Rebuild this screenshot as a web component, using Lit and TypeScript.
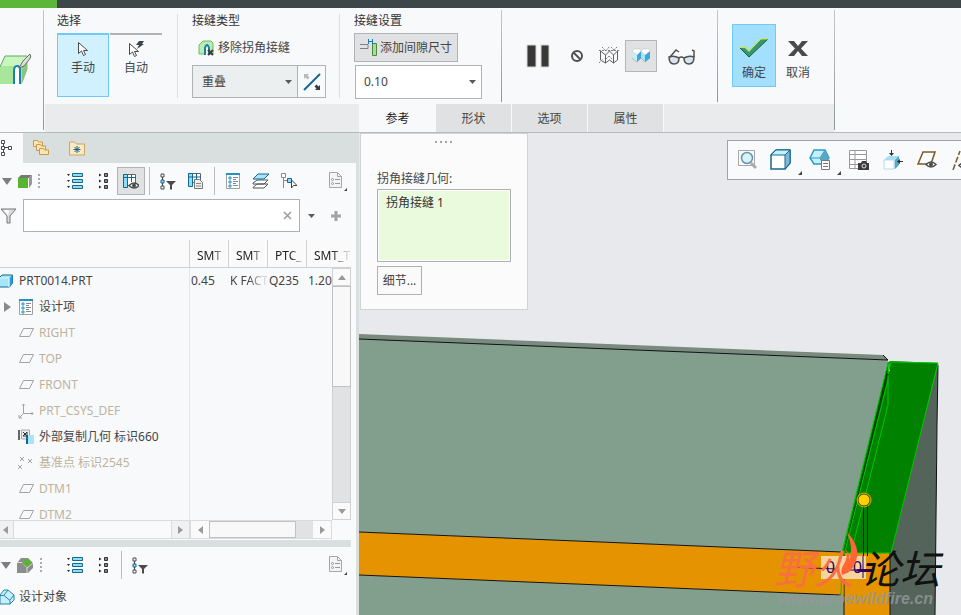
import { LitElement, html, svg, css, nothing, TemplateResult } from "lit";
import { customElement, property } from "lit/decorators.js";
import { classMap } from "lit/directives/class-map.js";

const pic = (w: number, h: number, body: unknown) =>
  html`<svg class="pic" width=${w} height=${h} viewBox="0 0 ${w} ${h}" fill="none" aria-hidden="true">${body}</svg>`;

const cursorPath = (x: number, y: number) => svg`
  <path transform="translate(${x} ${y})" d="M.5.5v11l3-2.500 2 4.500 2-1-2-4h4z" fill="#fff" stroke="#4a4a4a"/>`;

const eye = (x: number, y: number) => svg`<g transform="translate(${x} ${y})">
  <path d="M0 3.500Q5-1.500 10 3.500 5 8.500 0 3.500z" fill="#fff" stroke="#4a4a4a" stroke-width="1.500"/>
  <circle cx="5" cy="3.500" r="2" fill="#4a4a4a"/></g>`;

const icons: Record<string, TemplateResult> = {
  seam: pic(32, 32, svg`
    <path d="M0 30V13L5 2h22v14l-5 14H0z" fill="#a8e79b"/>
    <path d="M5 2h22l-5 10H0z" fill="#c9f5bf"/><path d="M0 13L5 2h22" stroke="#63a85c"/>
    <path d="M22 12l5-9v12l-5 13" fill="#86c97c" stroke="#86bf7d"/>
    <path d="M14 30V17q0-5 3-5t4 5v13z" fill="#fff"/><path d="M14 30V17q0-5 3-5t3 3v15" stroke="#1b7fae" stroke-width="2"/>
    <path d="M19 14l4-7 7-7q2 3-1 6l-5 6z" fill="#ddd" stroke="#6b6b6b"/>`),
  cursor: pic(12, 16, cursorPath(1, 1)),
  cursorAuto: pic(18, 16, svg`${cursorPath(2, 2)}<path d="M12 0h5l-2 3h2l-7 5 2-4H9z" fill="#3c4648"/>`),
  removeSeam: pic(16, 16, svg`
    <path d="M1 14V5l4-4h8l2 2v11z" fill="#b9efae" stroke="#77b46e"/>
    <path d="M7 15V8q2-6 4 0v7" fill="#fff" stroke="#1b7fae" stroke-width="2"/>
    <path d="M10 10l5 5M15 10l-5 5" stroke="#3c3c3c" stroke-width="2"/>`),
  flip: pic(18, 18, svg`
    <path d="M1 17L17 1" stroke="#14688f" stroke-width="2"/>
    <path d="M1 1h5L4.500 2.500l2 2-2 2-2-2L1 6z" fill="#b9b9b9"/>
    <path d="M17 17h-5l1.500-1.500-2-2 2-2 2 2L17 12z" fill="#3c3c3c"/>`),
  gapDim: pic(18, 18, svg`
    <path d="M0 5.500h8v4H0" stroke="#808080"/>
    <path d="M12.500 4.500h4v12h-4z" fill="#9be58a" stroke="#4f8548"/>
    <path d="M8.500 0v5M12.500 0v5M8 2.500h5" stroke="#1b7fae"/>`),
  pause: pic(24, 24, svg`<path d="M1 1h9v22H1zM15 1h8v22h-8z" fill="#383838" stroke="#d8d8d2"/>`),
  none: pic(14, 14, svg`<circle cx="7" cy="7" r="5" stroke="#505050" stroke-width="2"/><path d="M3.500 3.500l7 7" stroke="#505050" stroke-width="2"/>`),
  wire: pic(22, 18, svg`
    <path d="M2.500 3v10l5 3 4-3 4 3 4-3V3M7.500 8v8M15.500 8v8M2.500 4l5 4 4-4 4 4 4-4" stroke="#606060"/>
    <path d="M4 0l4 4M11 0L8 4M13 0l4 4M19 0l-4 4M1 16l4-4M1 3.500h20M8 12l3-3M14 12l-3-3" stroke="#808080" stroke-dasharray="2 1"/>`),
  solid: pic(20, 16, svg`
    <path d="M1 3l5 4v7l-5-4z" fill="#c9eefb"/><path d="M6 7l4-4v7l-4 4z" fill="#38a9e0"/>
    <path d="M10 3l4 4v7l-4-4z" fill="#a6e4fa"/><path d="M14 7l5-4v7l-5 4z" fill="#38a9e0"/>
    <path d="M1 3l2-2h6l1 2-4 4zM10 3l2-2h6l1 2-5 4z" fill="#fff" stroke="#b9bcbe" stroke-width=".5"/>
    <path d="M1 10l5 4 4-4 4 4 5-4" stroke="#8a8f92" stroke-width=".5"/>`),
  glasses: pic(27, 16, svg`
    <path d="M1 8q5-2 10 1 0 6-5 6t-5-7zM16 9q5-3 10-1 0 7-5 7t-5-6z" fill="#d7e4ec" stroke="#505050" stroke-width="1.500"/>
    <path d="M11 9q2-2 5 0M2 8L8 1l3 2M26 8V2l-2-1" stroke="#505050" stroke-width="1.500"/>`),
  ok: pic(30, 20, svg`<path d="M1 10h5l4 4L22 1h7L10 19z" fill="#37996a"/><path d="M1 10l9 9L29 1" stroke="#1e5c3d"/><path d="M1 9.500h6l3 3.500L22 1h7" stroke="#d4e617"/>`),
  cancel: pic(20, 17, svg`<path d="M0 1h6l4 5 4-5h6l-7 7.500 7 7.500h-6l-4-5-4 5H0l7-7.500z" fill="#4a4a4a"/>`),
  tree: pic(16, 18, svg`<path d="M3.500 1v15M4 8.500h7" stroke="#4a4a4a"/><path d="M1.500 1.500h3v3h-3zM1.500 7.500h3v3h-3zM1.500 13.500h3v3h-3zM8.500 7.500h3v3h-3z" fill="#fff" stroke="#4a4a4a"/>`),
  folders: pic(16, 16, svg`
    ${[[0, 0], [3, 4], [6, 8]].map(([x, y]) => svg`<path transform="translate(${x} ${y})" d="M.5 6.500v-6h4l1 1.500h4v4.500z" fill="#fbe6b4" stroke="#c99a4c"/>`)}`),
  favorite: pic(16, 15, svg`
    <path d="M.5 14V1h5l2 2h8v11z" fill="#fde9c0" stroke="#c9a66a"/>
    <path d="M8 5v7M4.500 8.500h7M5.500 6l5 5M10.500 6l-5 5" stroke="#14688f"/>`),
  down: pic(10, 7, svg`<path d="M0 0h10L5 7z" fill="#7d7d7d"/>`),
  cube: pic(14, 14, svg`<path d="M0 4l3-3h11l-3 3z" fill="#777"/><path d="M11 4l3-3v9l-3 4z" fill="#999"/><path d="M0 4h10v10H0z" fill="#58b531"/>`),
  body: pic(16, 16, svg`
    <path d="M0 6l4-5h7l5 5v5l-5 5H0z" fill="#8c8c8c"/><path d="M0 5.500h5l5 5V16M16 6l-6 5" stroke="#dcdcdc"/>
    <path d="M5 6l5-5 5 5-5 4z" fill="#58b531"/>`),
  dots: pic(2, 14, svg`<path d="M0 0h2v2H0zM0 4h2v2H0zM0 8h2v2H0zM0 12h2v2H0z" fill="#a9adad"/>`),
  expand: pic(16, 16, svg`
    <path d="M5.500.5h10v3h-10zM5.500 6.500h10v3h-10zM5.500 12.500h10v3h-10z" fill="#8edcf8" stroke="#14688f"/>
    <path d="M0 1h3L1.500 3zM0 7h3L1.500 9zM0 13h3l-1.500 2z" fill="#222"/>`),
  collapse: pic(9, 16, svg`
    <path d="M5.500.5h3v3h-3zM5.500 6.500h3v3h-3zM5.500 12.500h3v3h-3z" fill="#888" stroke="#333"/>
    <path d="M0 .5v3L2.500 2zM0 6.500v3L2.500 8zM0 12.500v3L2.500 14z" fill="#222"/>`),
  columnsEye: pic(16, 16, svg`
    <path d="M.5 1.500h12v11H.5z" fill="#fff" stroke="#666"/><path d="M.5 1.500h4v13h-4z" fill="#8edcf8" stroke="#14688f"/>
    <path d="M0 4.500h13M8.500 1v8" stroke="#14688f"/>${eye(6, 9)}`),
  columnsDoc: pic(16, 16, svg`
    <path d="M.5.5h12v9H.5z" fill="#fff" stroke="#666"/><path d="M.5.5h4v13h-4z" fill="#8edcf8" stroke="#14688f"/>
    <path d="M0 4h13M8.500 0v6" stroke="#14688f"/><path d="M6.500 6.500h5l3 3v6h-8z" fill="#eee" stroke="#777"/><path d="M8 10.500h5M8 13h5" stroke="#888"/>`),
  treeFilter: pic(16, 17, svg`
    <path d="M2.500 3v10" stroke="#4a4a4a"/><path d="M1 1h3v3H1zM1 13h3v3H1z" fill="#fff" stroke="#4a4a4a"/><path d="M1 7h3v3H1z" fill="#8edcf8" stroke="#14688f"/>
    <path d="M6 8h10l-4 4v4.500h-2V12z" fill="#4a4a4a"/>`),
  items: pic(14, 16, svg`
    <path d="M.5.5h13v15H.5z" fill="#fff" stroke="#a0a0a0"/><path d="M0 1h14" stroke="#2492c4" stroke-width="2"/>
    <path d="M3 4h2v2H3zM3 8h2v2H3zM3 12h2v2H3z" stroke="#2492c4"/><path d="M7 4.500h5M7 6.500h3M7 8.500h5M7 10.500h3M7 12.500h5" stroke="#888"/>`),
  layers: pic(18, 16, svg`
    <path d="M1 14.500L5 11h11l-4 4H1zM1 10L5 7h11l-4 4H1z" fill="#fff" stroke="#555"/><path d="M1 6l5-5h11l-5 5z" fill="#a9e4fa" stroke="#14688f"/>`),
  treeSelect: pic(16, 16, svg`
    <path d="M2.500 4v11M3 7.500h5" stroke="#888"/><path d="M.5.5h4v4h-4z" fill="#fff" stroke="#888"/>
    <path d="M6.500 5.500h4v4h-4z" fill="#8edcf8" stroke="#14688f"/><path d="M10.500 7v8l2-2.500h3.500z" fill="#fff" stroke="#444"/>`),
  doc: pic(19, 21, svg`
    <path d="M1.500 1.500h8l4 4v11h-12z" fill="#f3f4f5" stroke="#a3a9ab"/><path d="M9.500 1.500v4h4" stroke="#a3a9ab"/>
    <circle cx="4.500" cy="8.500" r="1" stroke="#999"/><circle cx="4.500" cy="12.500" r="1" stroke="#999"/><path d="M7 8.500h5M7 12.500h5" stroke="#999"/>
    <path d="M19 17v3h-3z" fill="#444"/>`),
  funnel: pic(17, 16, svg`<path d="M1 1h15l-6 7v7H7V8z" fill="#d9dcdc" stroke="#777"/><path d="M4 2h5L8 8z" fill="#fff"/>`),
  clear: pic(9, 9, svg`<path d="M1 1l7 7M8 1L1 8" stroke="#9a9a9a" stroke-width="1.500"/>`),
  caret: pic(7, 4, svg`<path d="M0 0h7L3.500 4z" fill="#5a5a5a"/>`),
  plus: pic(12, 12, svg`<path d="M6 1v10M1 6h10" stroke="#a0a4a4" stroke-width="3"/>`),
  part: pic(14, 14, svg`<path d="M0 4l3-3h10.500v8l-3 4H0z" fill="#a6e6fb" stroke="#14688f"/><path d="M10.500 4l3-3v8l-3 4z" fill="#2b9bd4"/><path d="M0 4h10V13" stroke="#d9f5fd"/>`),
  object: pic(15, 16, svg`<path d="M0 6l4-5h4l6 5v5l-4 4H0z" fill="#c4effc" stroke="#2b84a8"/><path d="M0 6.500h4l6 5V15M10 11l4-5M4 6l4-5" stroke="#2b84a8"/>`),
  plane: pic(15, 10, svg`<path d="M4.500.5h10l-4 8H.5z" stroke="#a3a3a3"/>`),
  csys: pic(16, 16, svg`<path d="M5.500 1v9.500H15M5.500 10.500L1 15M4 2.500L5.500 1 7 2.500M13.500 9l1.500 1.500-1.500 1.500M1 12v3h3" stroke="#a3a3a3"/>`),
  copyGeom: pic(16, 16, svg`
    <path d="M3.500 1h8v9h-8z" fill="#ececec" stroke="#aaa"/><path d="M0 1h2v10H0z" fill="#666"/><path d="M5 3l3 3M9 3v4H5z" stroke="#333"/>
    <path d="M8 6h8v9H8z" fill="#a6e6fb"/><path d="M8 6h2v9H8z" fill="#14688f"/>`),
  points: pic(16, 14, svg`<path d="M2 1l4 4M6 1L2 5M10 3l4 4M14 3l-4 4M0 9l4 4M4 9l-4 4" stroke="#a3a3a3"/>`),
  zoomFit: pic(20, 20, svg`
    <path d="M1.500.5h16v15h-16z" stroke="#a7a7a7"/><path d="M14 13l5 5" stroke="#aaa" stroke-width="3"/>
    <circle cx="10" cy="8" r="5.500" fill="#d6f2fc" stroke="#6a93a8" stroke-width="1.500"/>`),
  shaded: pic(22, 22, svg`
    <path d="M1 6l5-5h14v13l-5 6H1z" fill="#fff" stroke="#14688f" stroke-width="1.500"/><path d="M15 6l5-5v13l-5 6z" fill="#7fb9d6" stroke="#14688f"/>
    <path d="M1 6l5-5h14l-5 5z" fill="#c4effc" stroke="#14688f"/>`),
  saved: pic(22, 22, svg`
    <path d="M1 9l4-8h11l4 8-4 6H5z" fill="#c4effc" stroke="#2b9bc4" stroke-width="1.500"/><path d="M1 9h10M16 1l-5 8 3 6" stroke="#2b9bc4"/><path d="M16 1l4 8v5h-7l-2-5z" fill="#5da5c6"/>
    <path d="M12.500 11.500h8v9h-8z" fill="#fff" stroke="#777"/><path d="M14 14.500h5M14 17.500h5" stroke="#777"/>`),
  viewMgr: pic(20, 20, svg`
    <path d="M.5.5h17v18H.5zM.5 4.500h17M.5 9.500h17M.5 14.500h17M6 1v17" fill="#fff" stroke="#999"/>
    <path d="M9 13h3l1-2h4l1 2h2v7H9z" fill="#3c3c3c"/><circle cx="15" cy="16" r="2" stroke="#ddd"/>`),
  persp: pic(20, 20, svg`
    <path d="M1 10l4-4h11v9l-4 4H1z" fill="#a6def2"/><path d="M1 10h10v9H1z" fill="#fff" stroke="#b5dcea"/><path d="M12 10l4-4v9l-4 4z" fill="#5da5c6"/>
    <path d="M8.500 0v4M20 11.500h-5" stroke="#333"/><path d="M6 3h5L8.500 6zM17 9v5l-3-2.500z" fill="#333"/>`),
  planeEye: pic(20, 18, svg`<path d="M6 1h12l-4 12H1z" stroke="#7b5b26" stroke-width="1.500"/>${eye(9, 10)}`),
  axisEye: pic(20, 20, svg`<path d="M2 20L9 1" stroke="#7b5b26" stroke-width="1.500" stroke-dasharray="6 2"/>${eye(8, 12)}`),
  up: pic(8, 5, svg`<path d="M0 5h8L4 0z" fill="#9a9a9a"/>`),
  downSmall: pic(8, 5, svg`<path d="M0 0h8L4 5z" fill="#9a9a9a"/>`),
  left: pic(5, 8, svg`<path d="M5 0v8L0 4z" fill="#9a9a9a"/>`),
  right: pic(5, 8, svg`<path d="M0 0v8l5-4z" fill="#9a9a9a"/>`),
  rowArrow: pic(7, 10, svg`<path d="M0 0v10l7-5z" fill="#8a8a8a"/>`),
};

const base = css`
  :host, *, *::before { box-sizing: border-box; }
  button, select, input {
    font: inherit; color: inherit; margin: 0; padding: 0;
    border: 0; border-radius: 0; background: none; outline: none; appearance: none;
  }
  .pic { display: block; flex: none; }
  button { display: flex; align-items: center; justify-content: center; flex: none; }
`;

@customElement("app-ribbon")
class AppRibbon extends LitElement {
  static styles = [base, css`
    :host { display: block; flex: none; background: #f8f9fb; border-bottom: 1px solid #b1bcbc; }
    .strip { height: 8px; display: flex; background: #3d4648; }
    .strip i { width: 57px; background: #5bb63a; }
    .bar { display: flex; height: 124px; }
    .logo { width: 43px; padding-top: 46px; }
    .rule { width: 1px; margin: 2px 0; background: linear-gradient(#c4c8c8, #8f9696); flex: none; }
    .main { flex: none; display: flex; flex-direction: column; margin: 0 0 0 1px; }
    .groups { flex: 1; display: flex; padding-left: 12px; }
    .group { display: flex; flex-direction: column; padding-top: 4px; }
    .title { height: 21px; line-height: 18px; color: #333; }
    .sep { width: 1px; margin: 6px 14px; background: #dcdfe1; flex: none; }
    .modes { display: flex; gap: 1px; width: 106px; }
    .mode {
      width: 52px; height: 64px; flex-direction: column; justify-content: flex-start; gap: 3px;
      padding-top: 6px; border-top: 2px solid #b2b3b5;
    }
    .mode.on { border: 1px solid #6fcaf7; border-top: 2px solid #6fcaf7; background: #d2f1fe; }
    .remove { height: 28px; gap: 4px; padding: 1px 0 0 6px; justify-content: flex-start; }
    .types { display: flex; width: 133px; height: 33px; margin-top: 4px; }
    .wrap { display: grid; align-items: center; flex: none; border: 1px solid #b0b3b5; }
    .wrap > * { grid-area: 1 / 1; }
    .wrap .pic { justify-self: end; margin-right: 5px; pointer-events: none; }
    .wrap select { width: 100%; height: 100%; padding-left: 9px; }
    .type { width: 106px; background: #eceff0; }
    .flip { width: 28px; border: 1px solid #b0b3b5; border-left: 0; }
    .settings { width: 147px; }
    .gap { width: 104px; height: 29px; gap: 2px; border: 1px solid #b0b3b5; background: #dfe1e2; }
    .value { width: 127px; height: 34px; margin: 3px 0 0 1px; background: #fff; }
    .value select { padding-left: 8px; }
    .tools { display: flex; align-items: center; height: 96px; padding: 0 16px 0 24px; }
    .tool { width: 32px; height: 32px; }
    .tool.on { border: 1px solid #b3b5b7; background: #dfe1e2; }
    .pauseb { width: 24px; height: 32px; margin-right: 11px; }
    .glass { width: 40px; margin-left: 4px; padding-top: 2px; }
    .finish { display: flex; padding: 16px 13px 0 14px; width: 116px; }
    .end { width: 44px; height: 63px; flex-direction: column; gap: 5px; padding-top: 6px; }
    .end .box { height: 24px; display: flex; align-items: center; }
    .end.on { border: 1px solid #6fcaf7; background: #a3dfff; }
    .tabs { height: 28px; display: flex; background: #e9ebec; padding-left: 314px; }
    .tab { width: 76px; padding-top: 2px; background: #dfe1e2; border-left: 1px solid #f8f9fb; }
    .tab:last-child { width: 77px; border-right: 1px solid #f8f9fb; }
    .tab.on { background: #f8f9fb; color: #222; }
  `];
  render() {
    return html`
      <div class="strip"><i></i></div>
      <div class="bar">
        <div class="logo">${icons.seam}</div>
        <div class="rule"></div>
        <div class="main">
          <div class="groups">
            <div class="group">
              <div class="title">选择</div>
              <div class="modes">
                <button class="mode on">${icons.cursor}<span>手动</span></button>
                <button class="mode">${icons.cursorAuto}<span>自动</span></button>
              </div>
            </div>
            <div class="sep"></div>
            <div class="group">
              <div class="title">接缝类型</div>
              <button class="remove">${icons.removeSeam}<span>移除拐角接缝</span></button>
              <div class="types">
                <div class="wrap type"><select aria-label="接缝类型"><option>重叠</option></select>${icons.caret}</div>
                <button class="flip" aria-label="反向">${icons.flip}</button>
              </div>
            </div>
            <div class="sep"></div>
            <div class="group settings">
              <div class="title">接缝设置</div>
              <button class="gap">${icons.gapDim}<span>添加间隙尺寸</span></button>
              <div class="wrap value"><select aria-label="接缝设置"><option>0.10</option></select>${icons.caret}</div>
            </div>
            <div class="rule"></div>
            <div class="tools">
              <button class="pauseb" aria-label="暂停">${icons.pause}</button>
              <button class="tool" aria-label="无预览">${icons.none}</button>
              <button class="tool" aria-label="分离">${icons.wire}</button>
              <button class="tool on" aria-label="连接">${icons.solid}</button>
              <button class="tool glass" aria-label="特征预览">${icons.glasses}</button>
            </div>
            <div class="rule"></div>
            <div class="finish">
              <button class="end on"><span class="box">${icons.ok}</span><span>确定</span></button>
              <button class="end"><span class="box">${icons.cancel}</span><span>取消</span></button>
            </div>
          </div>
          <div class="tabs" role="tablist">
            ${["参考", "形状", "选项", "属性"].map((t, i) => html`<button role="tab" class=${classMap({ tab: true, on: i === 0 })}>${t}</button>`)}
          </div>
        </div>
        <div class="rule"></div>
      </div>`;
  }
}

interface Row { icon: string; name: string; dim?: boolean; root?: boolean; open?: boolean; cells?: string[]; }

const rows: Row[] = [
  { icon: "part", name: "PRT0014.PRT", root: true, cells: ["0.45", "K FACT", "Q235", "1.20"] },
  { icon: "items", name: "设计项", open: true },
  { icon: "plane", name: "RIGHT", dim: true },
  { icon: "plane", name: "TOP", dim: true },
  { icon: "plane", name: "FRONT", dim: true },
  { icon: "csys", name: "PRT_CSYS_DEF", dim: true },
  { icon: "copyGeom", name: "外部复制几何 标识660" },
  { icon: "points", name: "基准点 标识2545", dim: true },
  { icon: "plane", name: "DTM1", dim: true },
  { icon: "plane", name: "DTM2", dim: true },
];

@customElement("model-tree")
class ModelTree extends LitElement {
  static styles = [base, css`
    :host {
      display: flex; flex-direction: column; flex: none; width: 359px; min-height: 0;
      background: #f8fafb; border-right: 3px solid #d9dfde;
    }
    .tabs { display: flex; height: 30px; flex: none; background: #d9dfde; }
    .tab { width: 36px; }
    .tab.on { width: 23px; background: #f8fafb; justify-content: flex-start; }
    .bar { display: flex; align-items: center; height: 36px; flex: none; padding-right: 5px; }
    .b { width: 28px; height: 28px; }
    .b.on { background: #dfe1e2; border: 1px solid #b0b3b5; }
    .menu { width: 34px; height: 28px; gap: 6px; }
    .grip { width: 10px; margin-right: 17px; display: flex; justify-content: center; }
    .grip.far { padding-left: 4px; }
    .sep { width: 1px; height: 28px; margin: 0 4px; background: #b9bdbe; }
    .push { margin-left: auto; }
    .filter { display: flex; align-items: center; flex: none; height: 33px; margin-bottom: 8px; }
    .search { display: flex; width: 277px; height: 33px; margin-left: 6px; border: 1px solid #aab2b3; background: #fff; }
    .search input { flex: 1; min-width: 0; padding: 0 6px; }
    .search button { width: 23px; }
    .drop { width: 22px; height: 28px; }
    .grid { position: relative; flex: 1; min-height: 0; overflow: hidden; margin-right: 5px; background: #f8f9fb; }
    table { width: 100%; table-layout: fixed; border-collapse: separate; border-spacing: 0; }
    col.n { width: 189px; } col.v { width: 39px; }
    th { height: 28px; padding: 4px 0 0 7px; font-weight: 400; text-align: left; color: #222; background: #fafafa; border-bottom: 1px solid #ced2d3; }
    th + th { border-left: 1px solid #ced2d3; }
    td { height: 26px; padding: 0; white-space: nowrap; overflow: hidden; }
    td:nth-child(2) { border-left: 1px solid #e4e7e9; }
    td + td { padding-left: 2px; }
    td:nth-child(2) { padding-left: 1px; }
    .cut { display: block; white-space: nowrap; mask-image: linear-gradient(90deg, #000 50%, #0003 88%); }
    .name { display: flex; align-items: center; height: 26px; }
    .ico { width: 16px; margin: 0 5px 0 2px; display: flex; justify-content: center; }
    .tw { width: 16px; padding-left: 4px; }
    .root .ico { width: 13px; margin: 0 6px 0 0; justify-content: flex-end; }
    .root .tw { display: none; }
    .dim { color: #bdb49c; }
    .vbar { position: absolute; right: 0; top: 28px; bottom: 0; width: 19px; display: flex; flex-direction: column; background: #e1e2e4; border-left: 1px solid #cfd1d3; border-right: 1px solid #cfd1d3; }
    .vbar button { height: 18px; background: #fafafa; border-top: 1px solid #cfd1d3; border-bottom: 1px solid #cfd1d3; }
    .thumb { height: 101px; background: #f8f8f8; border: 1px solid #bfc1c3; margin: 0 -1px; }
    .fill { flex: 1; }
    .hbars { display: flex; flex: none; height: 19px; }
    .hbar { display: flex; flex: none; width: 190px; border: 1px solid #d9dcde; border-left: 0; }
    .hbar button { width: 18px; background: #f0f1f2; }
    .hbar button:first-child { width: 14px; padding-right: 3px; border-right: 1px solid #d9dcde; }
    .hbar button:last-child { border-left: 1px solid #d9dcde; }
    .hbar.act { width: 142px; border-left: 1px solid #d9dcde; background: #e1e2e4; }
    .hbar.act button, .hbar.act button:first-child { width: 18px; padding: 0; background: #fafafa; border: 0; }
    .hthumb { width: 87px; background: #f8f8f8; border: 1px solid #bfc1c3; }
    .split { height: 7px; flex: none; margin: 1px 5px 0 0; background: #d9dfde; }
    .object { display: flex; align-items: center; gap: 4px; height: 28px; flex: none; margin-bottom: 4px; }
  `];
  private tools(list: string[]) {
    return list.map((n) => n === "|" ? html`<span class="sep"></span>`
      : html`<button aria-label=${n} class=${classMap({ b: true, on: n === "columnsEye" })}>${icons[n]}</button>`);
  }
  render() {
    return html`
      <div class="tabs">
        <button class="tab on" aria-label="模型树">${icons.tree}</button>
        <button class="tab" aria-label="文件夹">${icons.folders}</button>
        <button class="tab" aria-label="收藏夹">${icons.favorite}</button>
      </div>
      <div class="bar">
        <button class="menu" aria-label="模型">${icons.down}${icons.cube}</button>
        <span class="grip">${icons.dots}</span>
        ${this.tools(["expand", "collapse", "columnsEye", "|", "treeFilter", "columnsDoc", "|", "items", "layers", "treeSelect"])}
        <button class="b push" aria-label="设置">${icons.doc}</button>
      </div>
      <div class="filter">
        ${icons.funnel}
        <div class="search"><input type="text" aria-label="搜索"><button aria-label="清除">${icons.clear}</button></div>
        <button class="drop" aria-label="搜索选项">${icons.caret}</button>
        <button class="b" aria-label="添加">${icons.plus}</button>
      </div>
      <div class="grid">
        <table>
          <colgroup><col class="n"><col class="v"><col class="v"><col class="v"><col></colgroup>
          <thead><tr><th></th>${["SMT", "SMT", "PTC_", "SMT_T"].map((h) => html`<th><span class="cut">${h}</span></th>`)}</tr></thead>
          <tbody>${rows.map((r) => html`<tr>
            <td><div class=${classMap({ name: true, root: !!r.root, dim: !!r.dim })}>
              <span class="tw">${r.open ? icons.rowArrow : nothing}</span><span class="ico">${icons[r.icon]}</span>${r.name}
            </div></td>
            ${[0, 1, 2, 3].map((i) => html`<td>${i === 1 && r.cells ? html`<span class="cut">${r.cells[i]}</span>` : r.cells?.[i]}</td>`)}
          </tr>`)}</tbody>
        </table>
        <div class="vbar">
          <button aria-label="向上">${icons.up}</button><div class="thumb"></div><div class="fill"></div><button aria-label="向下">${icons.downSmall}</button>
        </div>
      </div>
      <div class="hbars">
        <div class="hbar"><button aria-label="向左">${icons.left}</button><div class="fill"></div><button aria-label="向右">${icons.right}</button></div>
        <div class="hbar act"><button aria-label="向左">${icons.left}</button><div class="hthumb"></div><div class="fill"></div><button aria-label="向右">${icons.right}</button></div>
      </div>
      <div class="split"></div>
      <div class="bar">
        <button class="menu" aria-label="主体">${icons.down}${icons.body}</button>
        <span class="grip far">${icons.dots}</span>
        ${this.tools(["expand", "collapse", "|", "treeFilter"])}
        <button class="b push" aria-label="设置">${icons.doc}</button>
      </div>
      <div class="object">${icons.object}<span>设计对象</span></div>`;
  }
}

@customElement("model-view")
class ModelView extends LitElement {
  @property({ type: Number }) count = 1;
  static styles = [base, css`
    :host { display: block; flex: 1; min-width: 0; position: relative; overflow: hidden; background: #e8e9ed; }
    .scene { position: absolute; inset: 0; width: 100%; height: 100%; }
    .mark { font: italic 400 40px "Noto Sans CJK SC", sans-serif; }
    .url { font: italic 700 16px "Liberation Sans", sans-serif; }
    .num { font: 16px "Liberation Sans", sans-serif; }
    .panel {
      position: absolute; left: 1px; top: 0; width: 168px; height: 177px; padding: 7px 16px 0;
      background: #fbfbfb; border: 1px solid #cfd4d6; display: flex; flex-direction: column; align-items: flex-start;
    }
    .grip { align-self: center; }
    .panel label { margin-top: 27px; line-height: 18px; }
    .list { width: 134px; height: 73px; margin: 1px 0 4px; padding: 1px; border: 1px solid #aeb1b3; background: #fff; overflow: hidden; }
    .list select { display: block; width: 100%; height: 100%; background: #eafbdd; overflow: hidden; color: #333; }
    .list option { padding: 2px 7px; line-height: 18px; min-height: 0; }
    .more { width: 45px; height: 29px; border: 1px solid #aeb1b3; background: #fafafa; }
    .view { position: absolute; right: 0; top: 7px; width: 234px; height: 40px; padding-left: 2px; display: flex; align-items: center; overflow: hidden; border: 1px solid #9fa3a5; border-right: 0; background: #f8fafb; }
    .view button { width: 34px; height: 34px; }
    .view i { width: 5px; height: 22px; flex: none; display: flex; align-items: flex-end; }
    .view i::before { content: ""; margin: 0 0 -4px 0; border: 2px solid #444; border-top-color: transparent; border-left-color: transparent; }
  `];
  render() {
    return html`
      <svg class="scene" viewBox="359 133 602 482" preserveAspectRatio="xMinYMin slice" aria-hidden="true">
        <path d="M359 334L883 355l5 5L359 340z" fill="#788b7e"/>
        <path d="M359 339L888 360 842 552 359 532z" fill="#829e8d"/>
        <path d="M359 575l482 20h3v20H359z" fill="#829e8d"/>
        <path d="M359 532l484 20v43L359 575z" fill="#e59400"/>
        <path d="M844 553h46v62h-46z" fill="#e59400"/>
        <path d="M938 364l-1 60-2 191h-45v-62z" fill="#55645a"/>
        <path d="M359 339l529 21-5-5M359 532l483 20M359 575l482 20" fill="none" stroke="#111"/>
        <path d="M938 365l-1 60-2 190M890 553v62M844 553v62" fill="none" stroke="#111"/>
        <path d="M891 361l47 2-47 190h-49L888 362z" fill="#008200"/>
        <path d="M888 366l2 2-46 187-3 10z" fill="#003d00"/>
        <path d="M889 362l-1 10 2-1z" fill="#e8e9ed"/>
        <path d="M841 595l1-43 46-190v12l3-12 24 .500 23 .500-47 190h-43M888 375v30l-37 148M888 380l-44 175" fill="none" stroke="#00c400"/>
        <path d="M863.500 504v52M867.500 504v52" stroke="#1d0040"/>
        <path d="M821 556h45v23h-45z" fill="#f5d59d"/>
        <path d="M789 567l47 2M848 570h26M863 556v22" stroke="#2d0060" fill="none"/>
        <path d="M855 570l4 2h15v-3h-15z" fill="#2d0060"/>
        <g class="num" fill="#2d0060"><text x="826" y="573">0</text><text x="853" y="573">0</text></g>
        <circle cx="864" cy="500" r="6" fill="#ffd000" stroke="#5c4a00"/><circle cx="864" cy="500" r="7" fill="none" stroke="#e0b000"/>
        <g class="mark"><text x="774" y="584" fill="#fa6e43">野火</text><text x="860" y="584" fill="#111">论坛</text></g>
        <path d="M847 532q14 15 9 29-4 12-14 14-2-5 2-11 5-9 1-16 6 8 4 14 5-14-2-30z" fill="#ff6535"/>
        <text class="url" x="778" y="604" fill="#94999c" fill-opacity=".8">www.proewildfire.cn</text>
      </svg>
      <div class="panel">
        <svg class="pic grip" width="18" height="2"><path d="M0 0h2v2H0zM5 0h2v2H5zM10 0h2v2h-2zM15 0h2v2h-2z" fill="#a3a6a8"/></svg>
        <label for="refs">拐角接缝几何:</label>
        <div class="list"><select id="refs" size="3"><option>拐角接缝 ${this.count}</option></select></div>
        <button class="more">细节...</button>
      </div>
      <div class="view">
        <button aria-label="重新调整">${icons.zoomFit}</button><button aria-label="显示样式">${icons.shaded}</button><i></i>
        <button aria-label="已保存方向">${icons.saved}</button><i></i>
        <button aria-label="视图管理器">${icons.viewMgr}</button><button aria-label="透视图">${icons.persp}</button>
        <button aria-label="平面显示">${icons.planeEye}</button><button aria-label="轴显示">${icons.axisEye}</button>
      </div>`;
  }
}

@customElement("app-root")
class AppRoot extends LitElement {
  static styles = css`
    :host {
      display: flex; flex-direction: column; height: 100vh; overflow: hidden;
      font: 12px/16px "Noto Sans", "Noto Sans CJK SC", sans-serif; color: #454545; background: #f8f9fb;
    }
    .work { flex: 1; display: flex; min-height: 0; }
  `;
  render() {
    return html`<app-ribbon></app-ribbon><div class="work"><model-tree></model-tree><model-view></model-view></div>`;
  }
}
